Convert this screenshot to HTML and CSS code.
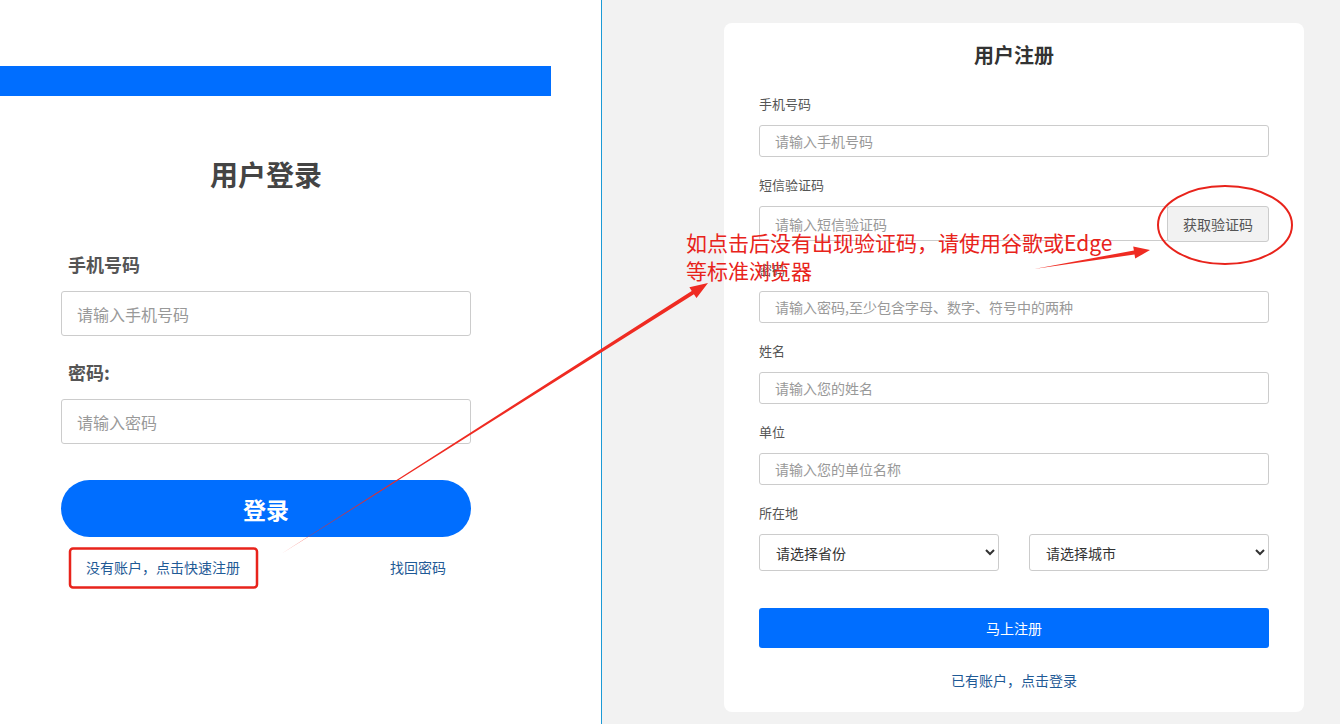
FILE: index.html
```html
<!DOCTYPE html>
<html lang="zh-CN">
<head>
    <meta charset="UTF-8">
    <meta name="viewport" content="width=device-width, initial-scale=1.0">
    <title>用户登录</title>
    <link rel="stylesheet" href="styles.css">
</head>
<body>
    <div class="page">
        <div class="login-side">
            <div class="top-bar"></div>
            <div class="login-box">
                <h2 class="login-title">用户登录</h2>
                <label class="login-label">手机号码</label>
                <input class="login-input" type="text" placeholder="请输入手机号码">
                <label class="login-label">密码:</label>
                <input class="login-input" type="password" placeholder="请输入密码">
                <button class="login-btn">登录</button>
                <div class="login-links">
                    <a href="#" class="link">没有账户，点击快速注册</a>
                    <a href="#" class="link">找回密码</a>
                </div>
            </div>
        </div>

        <div class="register-side">
            <div class="register-card">
                <h3 class="register-title">用户注册</h3>

                <div class="field">
                    <label>手机号码</label>
                    <input type="text" placeholder="请输入手机号码">
                </div>
                <div class="field">
                    <label>短信验证码</label>
                    <div class="code-row">
                        <input type="text" placeholder="请输入短信验证码">
                        <button class="code-btn">获取验证码</button>
                    </div>
                </div>
                <div class="field">
                    <label>密码</label>
                    <input type="password" placeholder="请输入密码,至少包含字母、数字、符号中的两种">
                </div>
                <div class="field">
                    <label>姓名</label>
                    <input type="text" placeholder="请输入您的姓名">
                </div>
                <div class="field">
                    <label>单位</label>
                    <input type="text" placeholder="请输入您的单位名称">
                </div>
                <div class="field">
                    <label>所在地</label>
                    <div class="select-row">
                        <select><option>请选择省份</option></select>
                        <select><option>请选择城市</option></select>
                    </div>
                </div>

                <button class="register-btn">马上注册</button>
                <div class="register-link"><a href="#" class="link">已有账户，点击登录</a></div>
            </div>
        </div>
    </div>

    <!-- 标注 -->
    <svg class="marks" width="1340" height="724" viewBox="0 0 1340 724">
        <rect x="70" y="548.5" width="187" height="39" rx="3" fill="none" stroke="#e8231b" stroke-width="2.5"/>
        <polygon points="281,554 693.9,294.3 696.5,298 708,283 689.4,287.3 691.7,290.9" fill="#ef2b22"/>
        <ellipse cx="1225" cy="225" rx="67" ry="39" fill="none" stroke="#e8231b" stroke-width="2"/>
        <polygon points="1034,269 1134.5,254.5 1135.2,258.6 1150,250 1133.2,246.4 1133.9,250.5" fill="#ef2b22"/>
    </svg>
    <div class="note">如点击后没有出现验证码，请使用谷歌或Edge<br>等标准浏览器</div>
</body>
</html>
```

FILE: styles.css
```css
* {
    margin: 0;
    padding: 0;
    box-sizing: border-box;
    font-family: "Microsoft YaHei", "Noto Sans CJK SC", "Noto Sans", sans-serif;
}

body {
    width: 1340px;
    height: 724px;
    overflow: hidden;
    background: #fff;
    position: relative;
}

.page {
    display: flex;
    height: 724px;
}

/* 左侧登录 */
.login-side {
    width: 602px;
    border-right: 1px solid #1c9ad6;
    background: #fff;
    padding-top: 66px;
}

.top-bar {
    width: 551px;
    height: 30px;
    background: #006eff;
}

.login-box {
    width: 410px;
    margin-left: 61px;
    display: flex;
    flex-direction: column;
}

.login-title {
    text-align: center;
    font-size: 28px;
    font-weight: bold;
    color: #444;
    margin-top: 58px;
    line-height: 40px;
    margin-bottom: 58px;
}

.login-label {
    font-size: 18px;
    font-weight: bold;
    color: #555;
    padding-left: 7px;
    line-height: 24px;
    margin-bottom: 15px;
}

.login-input {
    height: 45px;
    border: 1px solid #ccc;
    border-radius: 3px;
    padding: 0 15px;
    font-size: 16px;
    color: #333;
    margin-bottom: 24px;
    outline: none;
}

.login-input::placeholder {
    color: #999;
}

.login-btn {
    height: 57px;
    border: none;
    border-radius: 29px;
    background: #006eff;
    color: #fff;
    font-size: 23px;
    font-weight: bold;
    margin-top: 12px;
    cursor: pointer;
}

.login-links {
    display: flex;
    justify-content: space-between;
    padding: 0 25px 0 25px;
    margin-top: 20px;
}

.link {
    color: #1f5a96;
    font-size: 14px;
    text-decoration: none;
    line-height: 20px;
}

/* 右侧注册 */
.register-side {
    flex: 1;
    background: #f2f2f2;
    padding: 23px 0 0 122px;
}

.register-card {
    width: 580px;
    height: 689px;
    background: #fff;
    border-radius: 8px;
    padding: 20px 35px 0;
}

.register-title {
    text-align: center;
    font-size: 20px;
    font-weight: bold;
    color: #333;
    line-height: 24px;
    margin-bottom: 28px;
}

.field {
    margin-bottom: 19px;
}

.field label {
    display: block;
    font-size: 13px;
    color: #555;
    line-height: 18px;
    margin-bottom: 12px;
}

.field input {
    width: 100%;
    height: 32px;
    border: 1px solid #ccc;
    border-radius: 3px;
    padding: 0 15px;
    font-size: 14px;
    color: #333;
    outline: none;
}

.field input::placeholder {
    color: #999;
}

.code-row {
    display: flex;
}

.code-row input {
    height: 35px;
    flex: 1;
    border-radius: 3px 0 0 3px;
}

.code-btn {
    width: 102px;
    height: 36px;
    border: 1px solid #ccc;
    border-radius: 3px;
    background: #f2f2f2;
    color: #555;
    font-size: 14px;
    margin-left: -1px;
}

.select-row {
    display: flex;
    justify-content: space-between;
}

.select-row select {
    width: 240px;
    height: 37px;
    border: 1px solid #ccc;
    border-radius: 3px;
    background: #fff;
    padding: 0 12px;
    font-size: 14px;
    color: #333;
}

.register-btn {
    width: 100%;
    height: 40px;
    border: none;
    border-radius: 3px;
    background: #006eff;
    color: #fff;
    font-size: 14px;
    margin-top: 18px;
}

.register-link {
    text-align: center;
    margin-top: 19px;
}

/* 标注层 */
.marks {
    position: absolute;
    left: 0;
    top: 0;
    pointer-events: none;
}

.note {
    position: absolute;
    left: 686px;
    top: 228px;
    font-size: 21px;
    line-height: 28px;
    color: #e8231b;
    pointer-events: none;
}
```
